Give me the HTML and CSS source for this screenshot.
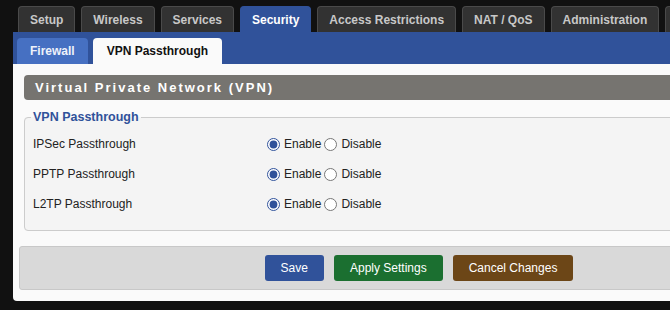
FILE: index.html
```html
<!DOCTYPE html>
<html lang="en">
<head>
  <meta charset="UTF-8" />
  <title>Security – VPN Passthrough</title>
  <link rel="stylesheet" href="styles.css">
</head>
<body>
  <div class="page">
    <!-- MAIN TABS -->
    <ul class="main-tabs">
      <li><a href="#">Setup</a></li>
      <li><a href="#">Wireless</a></li>
      <li><a href="#">Services</a></li>
      <li class="current"><a href="#">Security</a></li>
      <li><a href="#">Access Restrictions</a></li>
      <li><a href="#">NAT / QoS</a></li>
      <li><a href="#">Administration</a></li>
      <li class="more"><a href="#" aria-label="Status"></a></li>
    </ul>

    <div class="panel">
      <!-- SUB TABS -->
      <ul class="sub-tabs">
        <li><a href="#">Firewall</a></li>
        <li class="current"><a href="#">VPN Passthrough</a></li>
      </ul>

      <form class="content" onsubmit="return false;">
        <h2 class="section-title">Virtual Private Network (VPN)</h2>

        <fieldset>
          <legend>VPN Passthrough</legend>
          <div class="setting">
            <span class="setting-label">IPSec Passthrough</span>
            <label><input type="radio" name="ipsec" value="1" checked>Enable</label>
            <label><input type="radio" name="ipsec" value="0">Disable</label>
          </div>
          <div class="setting">
            <span class="setting-label">PPTP Passthrough</span>
            <label><input type="radio" name="pptp" value="1" checked>Enable</label>
            <label><input type="radio" name="pptp" value="0">Disable</label>
          </div>
          <div class="setting">
            <span class="setting-label">L2TP Passthrough</span>
            <label><input type="radio" name="l2tp" value="1" checked>Enable</label>
            <label><input type="radio" name="l2tp" value="0">Disable</label>
          </div>
        </fieldset>

        <!-- SUBMIT -->
        <div class="submit-footer">
          <button type="button" class="btn btn-save">Save</button>
          <button type="button" class="btn btn-apply">Apply Settings</button>
          <button type="button" class="btn btn-cancel">Cancel Changes</button>
        </div>
      </form>
    </div>
  </div>
</body>
</html>
```

FILE: styles.css
```css
/* GLOBAL */
html, body { overflow:hidden; }
body { margin:0; padding:0; background:#111; font-family:'Liberation Sans', Arial, sans-serif; font-size:12px; color:#222; }
.page { width:806px; padding:6px 0 0 13px; }

/* MAIN TABS */
.main-tabs { display:flex; gap:6px; list-style:none; margin:0 0 0 5px; padding:0; }
.main-tabs a { display:block; height:25px; line-height:26px; padding:0 11px; background:#323232;
  border:1px solid #4a4a4a; border-bottom:none; border-radius:4px 4px 0 0;
  color:#c8c8c8; font-weight:700; font-size:12px; text-decoration:none; white-space:nowrap; }
.main-tabs .current a { background:#30529a; border-color:#30529a; color:#fff; }
.main-tabs .more a { width:40px; padding:0; }

/* PANEL */
.panel { background:#fafafa; border-radius:4px 0 0 4px; }
.sub-tabs { display:flex; gap:5px; list-style:none; margin:0; padding:6px 0 0 4px; height:26px; background:#30529a; }
.sub-tabs a { display:block; height:26px; line-height:26px; padding:0 13px; background:#4670c2;
  border-radius:4px 4px 0 0; color:#eef2fa; font-weight:700; font-size:12px; text-decoration:none; }
.sub-tabs .current a { background:#fafafa; color:#111; padding:0 14px; }

.content { padding:11px 0 11px 6px; }
.section-title { margin:0 0 0 5px; height:25px; line-height:25px; padding-left:11px; background:#767470;
  border-radius:4px 0 0 4px; color:#fff; font-size:13px; font-weight:700; letter-spacing:2px; }

/* FIELDSET */
fieldset { margin:10px 0 0 5px; padding:5px 8px 11px; background:#f4f4f4; border:1px solid #cccccc; border-radius:4px; }
legend { margin-left:-2px; padding:0 2px; color:#30529a; font-weight:700; font-size:12.5px; }
.setting { display:flex; align-items:center; height:30px; font-size:12px; }
.setting-label { width:234px; }
.setting label { display:flex; align-items:center; margin-right:3px; }
.setting input { margin:0 4px 0 0; width:13px; height:13px; accent-color:#30529a; }

/* BUTTONS */
.submit-footer { display:flex; justify-content:center; gap:10px; margin-top:15px; padding:8px 0;
  background:#d9d9d9; border:1px solid #c8c8c8; border-radius:3px; }
.btn { height:26px; padding:0 16px; border:none; border-radius:3px; color:#fff; font-family:'Liberation Sans', Arial, sans-serif; font-size:12px; cursor:pointer; }
.btn-save { background:#30529a; }
.btn-apply { background:#1b6f30; }
.btn-cancel { background:#6c4617; }
```
